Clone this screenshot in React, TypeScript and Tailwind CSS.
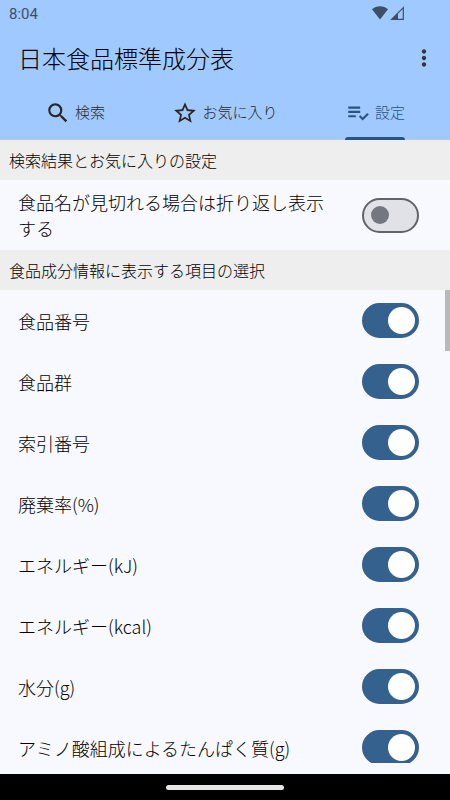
import React, { useState } from "react";
import {
  MdMoreVert,
  MdPlaylistAddCheck,
  MdSearch,
  MdStarBorder,
} from "react-icons/md";

const tabs = [
  { name: "検索", icon: MdSearch },
  { name: "お気に入り", icon: MdStarBorder },
  { name: "設定", icon: MdPlaylistAddCheck },
];

const nutrients = [
  "食品番号",
  "食品群",
  "索引番号",
  "廃棄率(%)",
  "エネルギー(kJ)",
  "エネルギー(kcal)",
  "水分(g)",
  "アミノ酸組成によるたんぱく質(g)",
];

const StatusBar = () => (
  <div className="flex h-7 items-center justify-between pl-[9px] pr-[46px] text-[#3c4f66]">
    <span className="font-['Roboto',sans-serif] text-[15px]">8:04</span>
    <div className="flex items-center gap-[2px] pb-[3px]">
      <svg width="16" height="14" viewBox="0 0 16 14" fill="currentColor">
        <path d="M8 13.5 0 3.2C2.2 1.3 5 .3 8 .3s5.800 1 8 2.900z" />
      </svg>
      <svg width="14" height="14" viewBox="0 0 14 14">
        <path
          d="M1.700 13.300 13.300 1.700V13.300z"
          fill="none"
          stroke="currentColor"
          strokeWidth="1.200"
        />
        <path d="M.5 14 8 6.500V14z" fill="currentColor" />
      </svg>
    </div>
  </div>
);

const SectionTitle = ({ children }: { children: React.ReactNode }) => (
  <h2 className="flex h-10 shrink-0 items-center bg-[#eeeeee] px-[9px] text-base font-light">
    {children}
  </h2>
);

type RowProps = {
  label: string;
  defaultOn?: boolean;
  className: string;
};

const SwitchRow = ({ label, defaultOn = false, className }: RowProps) => {
  const [on, setOn] = useState(defaultOn);
  return (
    <label
      className={`flex shrink-0 items-center justify-between gap-8 pl-[18px] pr-[31px] text-lg leading-[26px] font-light ${className}`}
    >
      <span>{label}</span>
      <input
        type="checkbox"
        role="switch"
        checked={on}
        onChange={(e) => setOn(e.target.checked)}
        className="flex h-[35px] w-[57px] shrink-0 appearance-none items-center rounded-full border-2 border-[#5f646b] bg-[#e1e2e8] px-[7px] before:size-[18px] before:rounded-full before:bg-[#73777f] checked:justify-end checked:border-[#35618e] checked:bg-[#35618e] checked:px-[2px] checked:before:size-[27px] checked:before:bg-white"
      />
    </label>
  );
};

const App = () => {
  const [active, setActive] = useState("設定");

  return (
    <div className="flex h-screen flex-col overflow-hidden bg-[#f8f9ff] font-['Noto_Sans_CJK_JP',sans-serif] text-black">
      <header className="shrink-0 bg-[#a0c9ff]">
        <StatusBar />
        <div className="flex h-[60px] items-center justify-between pl-[18px] pr-[13px]">
          <h1 className="text-2xl font-light">日本食品標準成分表</h1>
          <button aria-label="メニュー" className="text-[#33353a]">
            <MdMoreVert size={26} />
          </button>
        </div>
        <nav className="grid h-[52px] grid-cols-3 border-b border-[#c3c6cf]">
          {tabs.map(({ name, icon: Icon }) => (
            <button
              key={name}
              onClick={() => setActive(name)}
              className={`flex justify-center ${
                active === name ? "text-[#285482]" : "text-[#2b2622]"
              }`}
            >
              <span className="relative flex h-full items-center gap-1 pb-[2px] text-[15px] font-light">
                <Icon size={26} />
                {name}
                {active === name && (
                  <span className="absolute inset-x-0 -bottom-px h-[3px] rounded-t-[3px] bg-[#285482]" />
                )}
              </span>
            </button>
          ))}
        </nav>
      </header>

      <main className="flex min-h-0 flex-1 flex-col pb-[11px]">
        <SectionTitle>検索結果とお気に入りの設定</SectionTitle>
        <SwitchRow
          label="食品名が見切れる場合は折り返し表示する"
          className="py-[9px]"
        />
        <SectionTitle>食品成分情報に表示する項目の選択</SectionTitle>
        <div className="relative min-h-0 flex-1 overflow-hidden">
          {nutrients.map((item) => (
            <SwitchRow
              key={item}
              label={item}
              defaultOn
              className="h-[61px]"
            />
          ))}
          <div className="absolute right-0 top-0 h-[61px] w-[5px] bg-[#b9b9bb]" />
        </div>
      </main>

      <footer className="flex h-[26px] shrink-0 items-center justify-center bg-black">
        <div className="h-[5px] w-[118px] rounded-full bg-[#e6e6e6]" />
      </footer>
    </div>
  );
};

export default App;
